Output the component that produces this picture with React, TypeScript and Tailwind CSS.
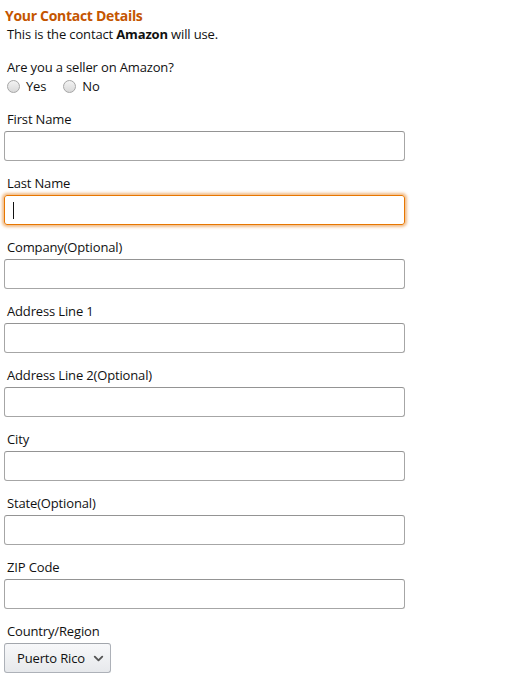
import { ChevronDown } from 'lucide-react';

const fields = [
  { label: 'First Name' },
  { label: 'Last Name', focused: true },
  { label: 'Company(Optional)' },
  { label: 'Address Line 1' },
  { label: 'Address Line 2(Optional)' },
  { label: 'City' },
  { label: 'State(Optional)' },
  { label: 'ZIP Code' },
];

function Radio({ label }: { label: string }) {
  return (
    <label className="flex items-center gap-[6px]">
      <span className="w-[13px] h-[13px] rounded-full border border-[#a6a6a6] bg-gradient-to-b from-[#f3f3f3] to-[#d9d9d9]" />
      <span>{label}</span>
    </label>
  );
}

export default function App() {
  return (
    <div className="w-[518px] h-[678px] bg-white pt-[6px] pl-[4px] text-[13px] leading-[19px] tracking-[-0.15px] text-[#111] font-['Open_Sans','Noto_Sans',sans-serif]">
      <h2 className="pl-px text-[14px] leading-[20px] font-bold tracking-[-0.3px] text-[#c45500]">Your Contact Details</h2>
      <p className="pl-[3px] -mt-px">
        This is the contact <b className="font-bold">Amazon</b> will use.
      </p>

      <p className="pl-[3px] mt-[14px]">Are you a seller on Amazon?</p>
      <div className="pl-[3px] flex items-center gap-[17px]">
        <Radio label="Yes" />
        <Radio label="No" />
      </div>

      <div className="mt-[14px] flex flex-col gap-[13px]">
        {fields.map((f) => (
          <div key={f.label} className="flex flex-col gap-[2px]">
            <span className="pl-[3px]">{f.label}</span>
            {f.focused ? (
              <div className="w-[401px] h-[30px] rounded-[3px] border border-[#e77600] shadow-[0_0_3px_2px_rgba(228,121,17,0.5)] flex items-center pl-[8px]">
                <span className="w-px h-[17px] bg-[#111]" />
              </div>
            ) : (
              <div className="w-[401px] h-[30px] rounded-[3px] border border-[#a6a6a6] border-t-[#949494] shadow-[inset_0_1px_0_rgba(255,255,255,0.5)]" />
            )}
          </div>
        ))}

        <div className="flex flex-col gap-[2px]">
          <span className="pl-[3px]">Country/Region</span>
          <div className="w-[107px] h-[30px] rounded-[3px] border border-[#adb1b8] border-t-[#a2a6ac] bg-gradient-to-b from-[#f7f8fa] to-[#e7e9ec] flex items-center pl-[12px] gap-[6px]">
            <span>Puerto Rico</span>
            <ChevronDown className="w-[15px] h-[15px] text-[#555]" strokeWidth={3} />
          </div>
        </div>
      </div>
    </div>
  );
}
